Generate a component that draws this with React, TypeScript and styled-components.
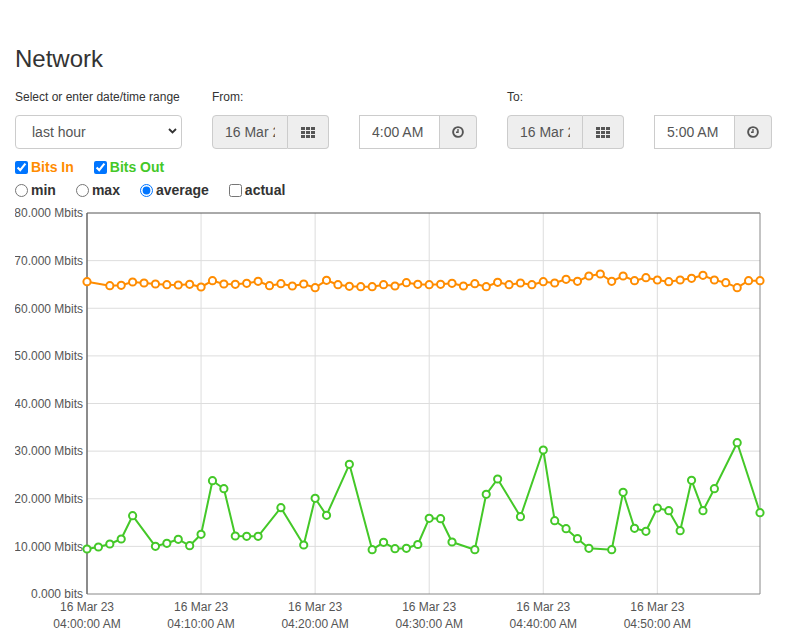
import React from 'react';
import styled, { createGlobalStyle } from 'styled-components';

const ORANGE = '#ff8c00';
const GREEN = '#44c828';

const GlobalStyle = createGlobalStyle`
  * { box-sizing: border-box; }
  body {
    margin: 0;
    background: #fff;
    color: #333;
    font-family: "Liberation Sans", Arial, sans-serif;
    font-size: 14px;
  }
`;

const Page = styled.div`
  padding: 46px 15px 0;
`;

const Title = styled.h3`
  margin: 0;
  font-size: 24px;
  font-weight: 500;
  line-height: 1.1;
  color: #333;
`;

const FilterRow = styled.div`
  display: flex;
  align-items: flex-end;
  gap: 30px;
  margin-top: 17px;
`;

const Field = styled.div<{ $width: number }>`
  display: flex;
  flex-direction: column;
  width: ${(p) => p.$width}px;
`;

const Label = styled.label`
  font-size: 12px;
  line-height: 17px;
  margin-bottom: 9px;
  color: #333;
  white-space: nowrap;
`;

const SelectBox = styled.div`
  position: relative;
  height: 34px;
`;

const Select = styled.select`
  appearance: none;
  width: 100%;
  height: 34px;
  padding: 0 30px 0 16px;
  border: 1px solid #ccc;
  border-radius: 4px;
  background: #fff;
  color: #555;
  font: 14px "Liberation Sans", Arial, sans-serif;
`;

const Chevron = styled.svg`
  position: absolute;
  right: 5px;
  top: 13px;
  pointer-events: none;
`;

const InputGroup = styled.div`
  display: flex;
  height: 34px;
`;

const TextInput = styled.input<{ $width: number; $grey?: boolean; $squareLeft?: boolean }>`
  width: ${(p) => p.$width}px;
  height: 34px;
  padding: 6px 12px;
  border: 1px solid #ccc;
  border-radius: ${(p) => (p.$squareLeft ? '0' : '4px 0 0 4px')};
  background: ${(p) => (p.$grey ? '#eee' : '#fff')};
  color: #555;
  font: 14px "Liberation Sans", Arial, sans-serif;
  outline: none;
`;

const Addon = styled.span<{ $width: number }>`
  display: flex;
  align-items: center;
  justify-content: center;
  width: ${(p) => p.$width}px;
  height: 34px;
  border: 1px solid #ccc;
  border-left: 0;
  border-radius: 0 4px 4px 0;
  background: #eee;
  color: #555;
`;

const OptionRow = styled.div<{ $top: number }>`
  display: flex;
  gap: 20px;
  margin-top: ${(p) => p.$top}px;
  line-height: 20px;
`;

const Option = styled.label<{ $color?: string }>`
  display: flex;
  align-items: center;
  font-size: 14px;
  font-weight: bold;
  color: ${(p) => p.$color ?? '#333'};
`;

const Toggle = styled.input`
  width: 13px;
  height: 13px;
  margin: 0 3px 0 0;
`;

const ChartSvg = styled.svg`
  display: block;
  margin-top: 1px;
  font-family: "Liberation Sans", Arial, sans-serif;
  font-size: 12px;
`;

function GridIcon() {
  const cells = [];
  for (let r = 0; r < 3; r++) {
    for (let c = 0; c < 3; c++) {
      cells.push(<rect key={`${r}-${c}`} x={c * 5} y={r * 4} width={4} height={3} />);
    }
  }
  return (
    <svg width="14" height="11" viewBox="0 0 14 11" fill="#555">
      {cells}
    </svg>
  );
}

function ClockIcon() {
  return (
    <svg width="12" height="12" viewBox="0 0 12 12" fill="none" stroke="#555">
      <circle cx="6" cy="6" r="4.9" strokeWidth="1.9" />
      <path d="M6 3 V6.2 H4" strokeWidth="1.4" />
    </svg>
  );
}

// minute offset from 04:00 -> Mbits
const bitsIn: [number, number][] = [
  [0, 65.57], [2, 64.74], [3, 64.82], [4, 65.51], [5, 65.3], [6, 65.09], [7, 64.94], [8, 64.88],
  [9, 65.03], [10, 64.46], [11, 65.79], [12, 65.09], [13, 65.03], [14, 65.24], [15, 65.66],
  [16, 64.74], [17, 65.15], [18, 64.67], [19, 65.09], [20, 64.31], [21, 65.87], [22, 64.94],
  [23, 64.61], [24, 64.52], [25, 64.52], [26, 64.94], [27, 64.67], [28, 65.36], [29, 65.03],
  [30, 64.94], [31, 65.03], [32, 65.24], [33, 64.67], [34, 65.15], [35, 64.52], [36, 65.45],
  [37, 64.94], [38, 65.3], [39, 64.94], [40, 65.57], [41, 65.3], [42, 66.08], [43, 65.66],
  [44, 66.77], [45, 67.19], [46, 65.66], [47, 66.77], [48, 65.79], [49, 66.41], [50, 65.93],
  [51, 65.57], [52, 65.93], [53, 66.29], [54, 66.92], [55, 65.93], [56, 65.36], [57, 64.31],
  [58, 65.79], [59, 65.79],
];

const bitsOut: [number, number][] = [
  [0, 9.45], [1, 9.87], [2, 10.5], [3, 11.55], [4, 16.44], [6, 10.02], [7, 10.65], [8, 11.49],
  [9, 10.14], [10, 12.54], [11, 23.79], [12, 22.11], [13, 12.18], [14, 12.12], [15, 12.12],
  [17, 18.12], [19, 10.29], [20, 20.09], [21, 16.52], [23, 27.23], [25, 9.3], [26, 10.86],
  [27, 9.51], [28, 9.6], [29, 10.39], [30, 15.89], [31, 15.81], [32, 10.92], [34, 9.3],
  [35, 20.93], [36, 24.15], [38, 16.23], [40, 30.24], [41, 15.39], [42, 13.71], [43, 11.61],
  [44, 9.6], [46, 9.3], [47, 21.35], [48, 13.8], [49, 13.17], [50, 18.06], [51, 17.49],
  [52, 13.29], [53, 23.87], [54, 17.49], [55, 22.11], [57, 31.77], [59, 17.07],
];

const W = 757;
const H = 433;
const L = 72;
const R = 745;
const T = 12;
const B = 393;
const px = (m: number) => L + ((R - L) * m) / 59;
const py = (v: number) => B - ((B - T) * v) / 80;

function Series({ data, color }: { data: [number, number][]; color: string }) {
  const pts = data.map(([m, v]) => `${px(m).toFixed(1)},${py(v).toFixed(1)}`).join(' ');
  return (
    <g>
      <polyline points={pts} fill="none" stroke={color} strokeWidth={2} strokeLinejoin="round" />
      {data.map(([m, v]) => (
        <circle key={m} cx={px(m)} cy={py(v)} r={3.6} fill="#fff" stroke={color} strokeWidth={2} />
      ))}
    </g>
  );
}

function Chart() {
  const yTicks = [0, 10, 20, 30, 40, 50, 60, 70, 80];
  const xTicks = [0, 10, 20, 30, 40, 50];
  return (
    <ChartSvg width={W} height={H} viewBox={`0 0 ${W} ${H}`}>
      {yTicks.slice(1, -1).map((v) => (
        <line key={v} x1={L} x2={R} y1={py(v)} y2={py(v)} stroke="#ddd" />
      ))}
      {xTicks.slice(1).map((m) => (
        <line key={m} x1={px(m)} x2={px(m)} y1={T} y2={B} stroke="#ddd" />
      ))}
      <line x1={L} x2={R} y1={T} y2={T} stroke="#555" />
      <line x1={R} x2={R} y1={T} y2={B} stroke="#888" />
      <line x1={L} x2={R} y1={B} y2={B} stroke="#888" />
      <line x1={L} x2={L} y1={T} y2={B} stroke="#666" strokeWidth={1.5} />
      {yTicks.map((v) => (
        <text key={v} x={68} y={py(v) + 4.3} textAnchor="end" fill="#555">
          {v === 0 ? '0.000 bits' : `${v.toFixed(3)} Mbits`}
        </text>
      ))}
      {xTicks.map((m) => (
        <g key={m}>
          <text x={px(m)} y={410} textAnchor="middle" fill="#555">
            16 Mar 23
          </text>
          <text x={px(m)} y={427} textAnchor="middle" fill="#555">
            {`04:${String(m).padStart(2, '0')}:00 AM`}
          </text>
        </g>
      ))}
      <Series data={bitsIn} color={ORANGE} />
      <Series data={bitsOut} color={GREEN} />
    </ChartSvg>
  );
}

export default function App() {
  return (
    <Page>
      <GlobalStyle />
      <Title>Network</Title>
      <FilterRow>
        <Field $width={167}>
          <Label>Select or enter date/time range</Label>
          <SelectBox>
            <Select defaultValue="hour">
              <option value="hour">last hour</option>
              <option value="day">last day</option>
              <option value="week">last week</option>
            </Select>
            <Chevron width="9" height="6" viewBox="0 0 9 6" fill="none" stroke="#333" strokeWidth="1.8">
              <path d="M1 1 L4.5 4.5 L8 1" />
            </Chevron>
          </SelectBox>
        </Field>
        <Field $width={117}>
          <Label>From:</Label>
          <InputGroup>
            <TextInput $width={76} $grey readOnly value="16 Mar 2023" />
            <Addon $width={41}>
              <GridIcon />
            </Addon>
          </InputGroup>
        </Field>
        <Field $width={118}>
          <InputGroup>
            <TextInput $width={81} $squareLeft readOnly value="4:00 AM" />
            <Addon $width={37}>
              <ClockIcon />
            </Addon>
          </InputGroup>
        </Field>
        <Field $width={117}>
          <Label>To:</Label>
          <InputGroup>
            <TextInput $width={76} $grey readOnly value="16 Mar 2023" />
            <Addon $width={41}>
              <GridIcon />
            </Addon>
          </InputGroup>
        </Field>
        <Field $width={118}>
          <InputGroup>
            <TextInput $width={81} $squareLeft readOnly value="5:00 AM" />
            <Addon $width={37}>
              <ClockIcon />
            </Addon>
          </InputGroup>
        </Field>
      </FilterRow>
      <OptionRow $top={8}>
        <Option $color={ORANGE}>
          <Toggle type="checkbox" defaultChecked />
          Bits In
        </Option>
        <Option $color={GREEN}>
          <Toggle type="checkbox" defaultChecked />
          Bits Out
        </Option>
      </OptionRow>
      <OptionRow $top={3}>
        <Option>
          <Toggle type="radio" name="agg" />
          min
        </Option>
        <Option>
          <Toggle type="radio" name="agg" />
          max
        </Option>
        <Option>
          <Toggle type="radio" name="agg" defaultChecked />
          average
        </Option>
        <Option>
          <Toggle type="checkbox" />
          actual
        </Option>
      </OptionRow>
      <Chart />
    </Page>
  );
}
